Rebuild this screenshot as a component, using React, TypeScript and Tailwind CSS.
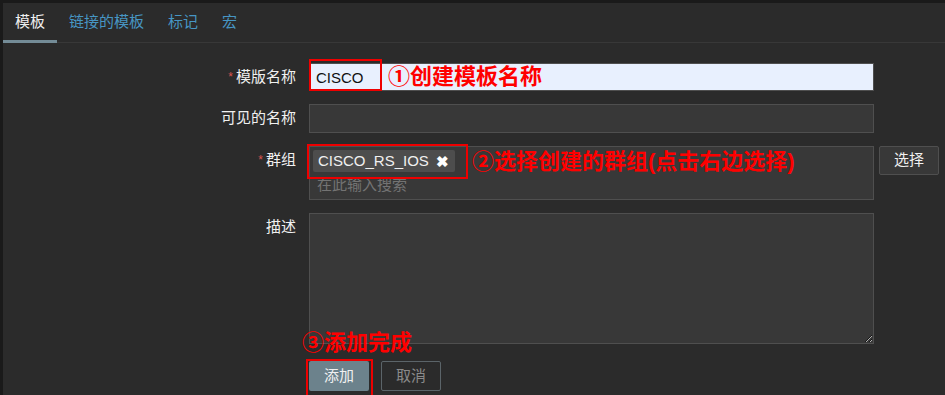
import React from "react";

const FONT = "font-['Liberation_Sans','Noto_Sans_CJK_SC',sans-serif]";

const Label = ({ text, required }: { text: string; required?: boolean }) => (
  <div className="w-[293px] shrink-0 text-right text-[15px] leading-[28px] text-[#f0f0f0]">
    {required && <span className="mr-[3px] text-[12px] align-top text-[#d9534f]">*</span>}
    {text}
  </div>
);

const Note = ({ text, className }: { text: string; className: string }) => (
  <span className={`absolute whitespace-nowrap text-[22px] font-bold leading-none text-[#f00] ${className}`}>
    {text}
  </span>
);

const App = () => {
  const tabs = ["模板", "链接的模板", "标记", "宏"];

  return (
    <div className={`h-screen bg-[#1a1a1a] pl-[3px] pt-[3px] ${FONT}`}>
      <div className="h-full overflow-hidden bg-[#2b2b2b]">
        {/* Tabs */}
        <div className="flex h-[40px] border-b border-[#383838]">
          {tabs.map((t, i) => (
            <div
              key={t}
              className={`relative flex items-center px-3 pb-px text-[15px] ${
                i === 0 ? "text-[#f0f0f0]" : "text-[#4796c4]"
              }`}
            >
              {t}
              {i === 0 && (
                <span className="absolute bottom-[-1px] left-0 right-0 h-[3px] bg-[#748c97]" />
              )}
            </div>
          ))}
        </div>

        {/* Form */}
        <div className="pt-[20px]">
          <div className="flex">
            <Label text="模版名称" required />
            <div className="relative ml-[13px] w-[565px]">
              <input
                defaultValue="CISCO"
                className="block h-[28px] w-full border border-[#4f4f4f] bg-[#e8f0fe] px-[6px] text-[15px] text-[#111] outline-none"
              />
              <span className="absolute left-0 top-[-4px] h-[32px] w-[73px] border-2 border-[#e00]" />
              <Note text="①创建模板名称" className="left-[79px] top-[3px]" />
            </div>
          </div>

          <div className="mt-[13px] flex">
            <Label text="可见的名称" />
            <input className="ml-[13px] block h-[29px] w-[565px] border border-[#4f4f4f] bg-[#383838] outline-none" />
          </div>

          <div className="mt-[13px] flex">
            <Label text="群组" required />
            <div className="relative ml-[13px] h-[54px] w-[565px] border border-[#4f4f4f] bg-[#383838] px-[3px] pt-[3px]">
              <div className="flex h-[22px] w-fit items-center gap-[7px] rounded-[2px] bg-[#4d4d4d] pl-[5px] pr-[6px] text-[15px] text-[#f0f0f0]">
                CISCO_RS_IOS
                <span className="text-[15px] font-bold leading-none text-white">✖</span>
              </div>
              <div className="mt-[3px] pl-[4px] text-[15px] leading-[20px] text-[#737373]">在此输入搜索</div>
              <span className="absolute left-[-3px] top-[-3px] h-[35px] w-[161px] border-2 border-[#e00]" />
              <Note text="②选择创建的群组(点击右边选择)" className="left-[162px] top-[4px]" />
            </div>
            <button className="ml-[5px] h-[29px] w-[60px] rounded-[2px] border border-[#4f4f4f] bg-[#383838] text-[15px] text-[#f0f0f0]">
              选择
            </button>
          </div>

          <div className="mt-[13px] flex">
            <Label text="描述" />
            <textarea className="ml-[13px] block h-[131px] w-[565px] border border-[#4f4f4f] bg-[#383838] outline-none" />
          </div>

          <div className="relative ml-[306px] mt-[17px] flex gap-[12px]">
            <button className="h-[30px] w-[60px] rounded-[2px] bg-[#6c828c] text-[15px] text-[#f0f0f0]">添加</button>
            <button className="h-[30px] w-[60px] rounded-[2px] border border-[#5b6469] text-[15px] text-[#8a8a8a]">取消</button>
            <span className="absolute left-[-3px] top-[-2px] h-[38px] w-[67px] border-2 border-[#e00]" />
            <Note text="③添加完成" className="left-[-7px] top-[-29px]" />
          </div>
        </div>
      </div>
    </div>
  );
};

export default App;
